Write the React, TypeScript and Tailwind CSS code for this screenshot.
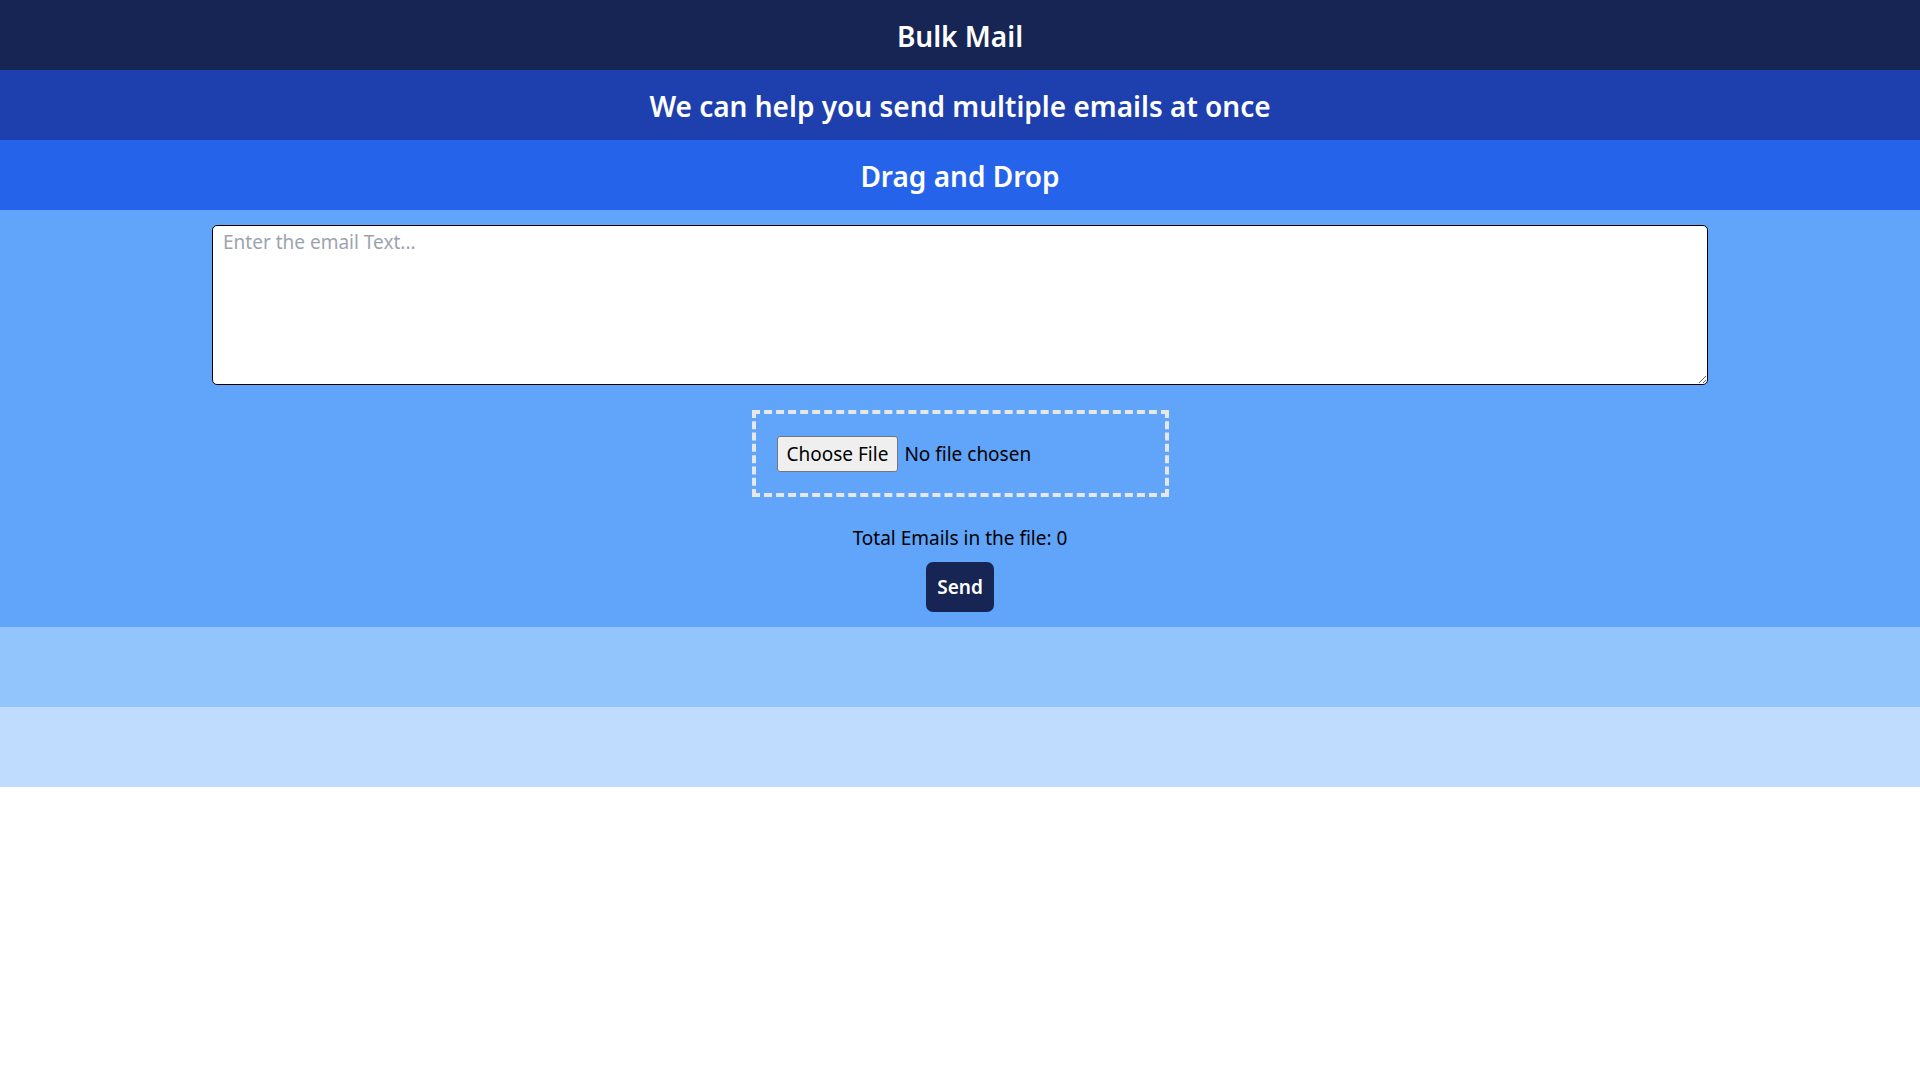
export default function App() {
  return (
    <div className="min-h-screen bg-white font-['Noto_Sans',sans-serif] text-black">
      {/* Title bands */}
      <div className="bg-[#172554] h-[70px] flex items-center justify-center pt-[2px]">
        <h1 className="text-[28px] font-semibold text-white">Bulk Mail</h1>
      </div>
      <div className="bg-[#1e40af] h-[70px] flex items-center justify-center pt-[2px]">
        <h2 className="text-[28px] font-semibold text-white">We can help you send multiple emails at once</h2>
      </div>
      <div className="bg-[#2563eb] h-[70px] flex items-center justify-center pt-[2px]">
        <h2 className="text-[28px] font-semibold text-white">Drag and Drop</h2>
      </div>

      {/* Form */}
      <div className="bg-[#60a5fa] flex flex-col items-center pt-[15px] pb-[15px]">
        <textarea
          placeholder="Enter the email Text..."
          className="w-[1496px] h-[160px] bg-white border border-black rounded-[5px] px-[10px] pt-[2px] text-[19px] leading-[28px] outline-none placeholder:text-[#9ca3af]"
        />
        <div className="mt-[25px] w-[417px] h-[87px] border-4 border-dashed border-[#e5e7eb] flex items-center pl-[21px]">
          <input
            type="file"
            className="text-[19px] file:h-[36px] file:px-[9px] file:pt-[1px] file:mr-[6px] file:bg-[#efefef] file:border file:border-[#767676] file:rounded-[3px] file:text-black"
          />
        </div>
        <p className="mt-[26px] text-[19px] leading-[30px]">Total Emails in the file: 0</p>
        <button className="mt-[9px] h-[50px] px-[11px] rounded-[7px] bg-[#172554] text-white text-[19px] font-semibold">
          Send
        </button>
      </div>

      <div className="bg-[#93c5fd] h-[80px]" />
      <div className="bg-[#bfdbfe] h-[80px]" />
    </div>
  )
}
